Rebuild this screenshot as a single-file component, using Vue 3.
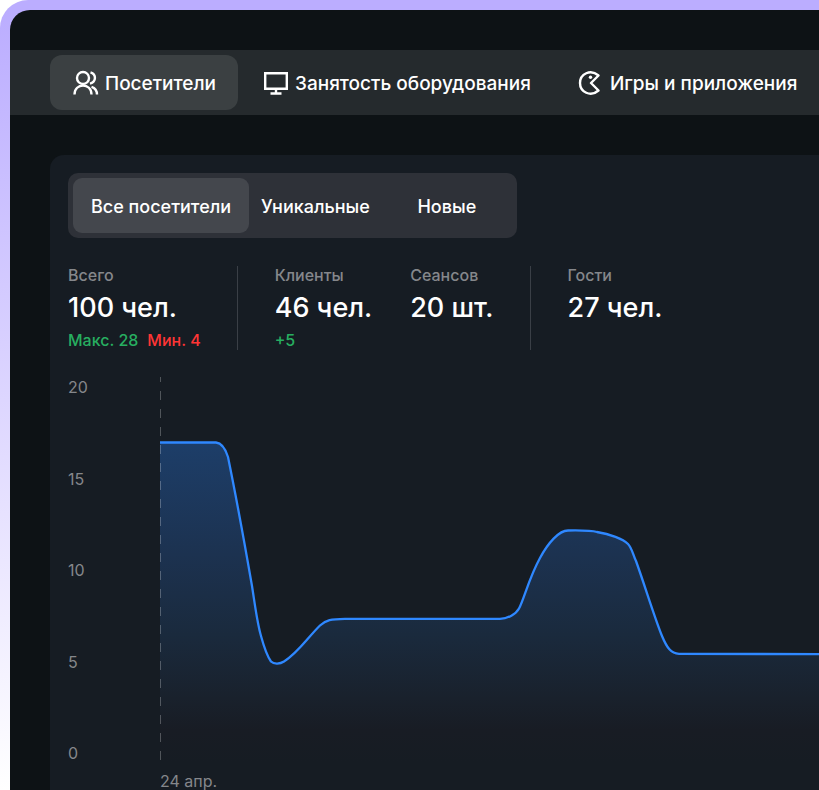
<script setup>
const tabs = [
  { id: 'visitors', label: 'Посетители', active: true },
  { id: 'equipment', label: 'Занятость оборудования', active: false },
  { id: 'games', label: 'Игры и приложения', active: false },
]

const filters = [
  { label: 'Все посетители', active: true },
  { label: 'Уникальные', active: false },
  { label: 'Новые', active: false },
]

const groups = [
  [{ label: 'Всего', value: '100 чел.', notes: [{ text: 'Макс. 28', tone: 'up' }, { text: 'Мин. 4', tone: 'down' }] }],
  [
    { label: 'Клиенты', value: '46 чел.', notes: [{ text: '+5', tone: 'up' }] },
    { label: 'Сеансов', value: '20 шт.', notes: [] },
  ],
  [{ label: 'Гости', value: '27 чел.', notes: [] }],
]

const ticks = [20, 15, 10, 5, 0]

const line =
  'M0 65.5H56C61 66 65.5 72 68 80C77 124 84 163 92 209C95 228 97 245 101 259C104 270 107 279 111 284.5C114 287.5 120 287 124 284.5C138 276 149 259 160 248.500C166 243 171 242 185 241.800H340C348 241.600 356 237 359 231.500C364 222 369 201 380 181C388 166 399 153.500 408 153.500C419 153.300 431 153.300 437 155C450 157 463 162 468 167C472 171 473 178 476 184C485 209 494 239 502 259C507 271 511 276.500 519 276.800L720 277.300'
</script>

<template>
  <div class="frame">
    <div class="screen">
      <nav class="tabs">
        <button v-for="tab in tabs" :key="tab.id" type="button" class="tab" :class="{ active: tab.active }">
          <svg v-if="tab.id === 'visitors'" class="icon" viewBox="0 0 26 26" aria-hidden="true">
            <circle cx="10" cy="8" r="6" />
            <path d="M1.500 24.500C1.500 12.500 18.500 12.500 18.500 24.500M17.500 2.300C23.500 4.300 23.500 11.700 17 13.700M18.500 16.800C22 18 24 21 24 24.500" />
          </svg>
          <svg v-else-if="tab.id === 'equipment'" class="icon" viewBox="0 0 26 26" aria-hidden="true">
            <path d="M2.200 3.200H23.800V18.800H2.200ZM13 19V23.500M7.500 23.500H18.500" />
          </svg>
          <svg v-else class="icon" viewBox="0 0 26 26" aria-hidden="true">
            <path d="M20.500 5.500C12.500 -1.500 2 4 2 13S12.500 27.500 20.500 20.500L13 13Z" stroke-linejoin="round" />
            <circle class="eye" cx="12.500" cy="7.200" r="1.700" />
          </svg>
          <span>{{ tab.label }}</span>
        </button>
      </nav>

      <main class="panel">
        <div class="filters">
          <button v-for="f in filters" :key="f.label" type="button" class="filter" :class="{ active: f.active }">
            {{ f.label }}
          </button>
        </div>

        <div class="stats">
          <section v-for="(group, i) in groups" :key="i" class="group">
            <div v-for="stat in group" :key="stat.label" class="stat">
              <span class="label">{{ stat.label }}</span>
              <strong class="value">{{ stat.value }}</strong>
              <div class="notes">
                <span v-for="note in stat.notes" :key="note.text" :class="note.tone">{{ note.text }}</span>
              </div>
            </div>
          </section>
        </div>

        <div class="chart">
          <div class="axis">
            <span v-for="t in ticks" :key="t">{{ t }}</span>
          </div>
          <div class="plot">
            <svg class="graph" height="386" aria-hidden="true">
              <defs>
                <linearGradient id="fill" x1="0" y1="65" x2="0" y2="386" gradientUnits="userSpaceOnUse">
                  <stop offset="0" stop-color="#1d3e69" />
                  <stop offset="0.350" stop-color="#1c3250" />
                  <stop offset="0.600" stop-color="#1a2a3d" />
                  <stop offset="0.800" stop-color="#19212c" />
                  <stop offset="0.900" stop-color="#181c24" />
                  <stop offset="1" stop-color="#161c23" />
                </linearGradient>
              </defs>
              <path :d="line + 'V386H0Z'" fill="url(#fill)" />
              <path class="marker" d="M0.500 0V386" />
              <path class="line" :d="line" />
            </svg>
            <span class="date">24 апр.</span>
          </div>
        </div>
      </main>
    </div>
  </div>
</template>

<style>
body {
  background: #fff;
}
</style>

<style scoped>
.frame {
  box-sizing: border-box;
  height: 100vh;
  min-height: 480px;
  padding: 10px 0 0 10px;
  border-radius: 28px 0 0 0;
  background: linear-gradient(#bbadff, #bbadff 10px, #fff);
  font-family: Inter, "Liberation Sans", sans-serif;
  font-weight: 450;
  color: #fff;
  overflow: hidden;
}
.screen {
  box-sizing: border-box;
  height: 100%;
  padding-top: 40px;
  border-radius: 20px 0 0 0;
  background: #0d1215;
  overflow: hidden;
}
button {
  border: 0;
  background: none;
  color: inherit;
  font: inherit;
  white-space: nowrap;
}
.tabs {
  display: flex;
  gap: 3px;
  padding: 5px 0 5px 40px;
  background: #252a2d;
}
.tab {
  display: flex;
  align-items: center;
  gap: 6px;
  height: 55px;
  padding: 0 22px;
  border-radius: 12px;
  font-size: 19px;
}
.tab span {
  padding-top: 2px;
}
.tab.active {
  padding: 0 22px 0 23px;
  background: #3b4042;
}
.icon {
  width: 26px;
  height: 26px;
  fill: none;
  stroke: #fff;
  stroke-width: 2.400;
}
.eye {
  fill: #fff;
  stroke: none;
}
.panel {
  height: 800px;
  margin: 40px 0 0 40px;
  padding: 18px;
  padding-right: 0;
  border-radius: 14px 0 0 0;
  background: #161c23;
}
.filters {
  display: flex;
  width: fit-content;
  padding: 5px;
  border-radius: 10px;
  background: #2e3138;
}
.filter {
  min-width: 130px;
  height: 55px;
  padding: 2px 12px 0;
  border-radius: 9px;
  font-size: 18px;
}
.filter.active {
  padding: 2px 18px 0;
  background: #44474d;
}
.stats {
  display: flex;
  margin-top: 28px;
}
.group {
  display: flex;
  gap: 38px;
  padding-right: 36px;
}
.group + .group {
  padding-left: 37px;
  border-left: 1px solid #3a3f46;
}
.stat {
  display: flex;
  flex-direction: column;
  white-space: nowrap;
}
.label {
  color: #85878b;
  font-size: 16px;
  line-height: 18px;
}
.value {
  font-size: 27px;
  font-weight: 500;
  line-height: 48px;
}
.notes {
  display: flex;
  gap: 9px;
  height: 18px;
  font-size: 16px;
  line-height: 16px;
}
.up {
  color: #27ae60;
}
.down {
  color: #ff3535;
}
.chart {
  display: flex;
  margin-top: 27px;
  color: #85878b;
  font-size: 16px;
  font-weight: 400;
  line-height: 20px;
}
.axis {
  display: flex;
  flex-direction: column;
  justify-content: space-between;
  width: 92px;
  height: 386px;
}
.plot {
  flex: 1;
  min-width: 0;
}
.graph {
  display: block;
  width: 100%;
}
.line {
  fill: none;
  stroke: #2f88ff;
  stroke-width: 2.300;
}
.marker {
  stroke: #fff;
  stroke-opacity: 0.250;
  stroke-dasharray: 9 9;
  stroke-dashoffset: 4;
}
.date {
  display: block;
  margin-top: 8px;
}
</style>
